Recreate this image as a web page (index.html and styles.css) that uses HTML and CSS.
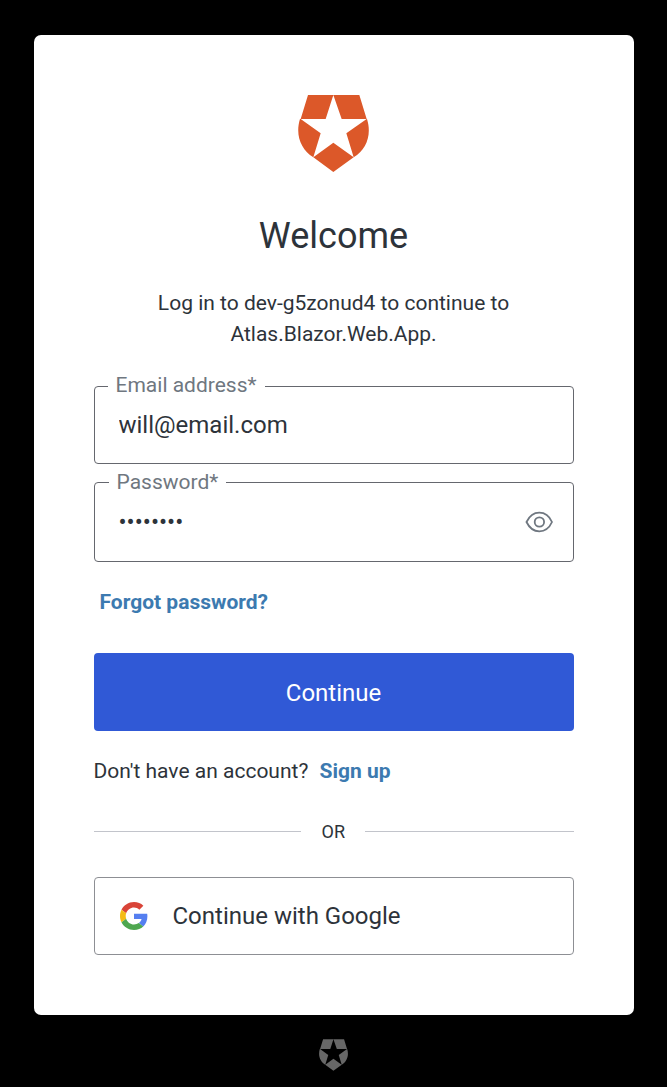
FILE: index.html
```html
<!DOCTYPE html>
<html lang="en">
<head>
<meta charset="utf-8">
<title>Log in</title>
<link rel="stylesheet" href="styles.css">
</head>
<body>
<main class="card">
  <svg class="logo" viewBox="45 45 213 231" aria-hidden="true">
    <path id="shield" fill="currentColor" d="M75 45H151L128 117H53ZM151 45H229L251 117H176ZM53 117L113 160L91 232C54 208 36 165 51 117ZM251 117L190 160L212 232C250 208 267 165 252 117ZM91 232L151 188L212 232L151 276Z"/>
  </svg>
  <h1 class="title">Welcome</h1>
  <p class="intro">Log in to dev-g5zonud4 to continue to<br>Atlas.Blazor.Web.App.</p>
  <form class="form">
    <div class="field email">
      <label class="label" for="email">Email address*</label>
      <input class="input" id="email" type="text" value="will@email.com">
    </div>
    <div class="field password">
      <label class="label" for="password">Password*</label>
      <input class="input" id="password" type="password" value="password">
      <svg class="eye" viewBox="0 0 28 22" fill="none" stroke="currentColor" stroke-width="1.8" aria-hidden="true">
        <path d="M1.500 11C4.500 4.800 9 1.700 14.300 1.700S24.200 4.800 27 11C24.200 17.200 19.600 20.300 14.300 20.300S4.500 17.200 1.500 11Z"/>
        <circle cx="14.400" cy="11" r="4.700"/>
      </svg>
    </div>
    <a class="link forgot">Forgot password?</a>
    <button class="submit" type="button">Continue</button>
  </form>
  <p class="signup">Don't have an account? <a class="link">Sign up</a></p>
  <div class="divider"><span class="or">OR</span></div>
  <button class="google" type="button">
    <svg class="google-icon" viewBox="0 0 48 48" aria-hidden="true">
      <path fill="#d94438" d="M24 9.500c3.540 0 6.710 1.220 9.210 3.600l6.850-6.850C35.900 2.380 30.470 0 24 0 14.620 0 6.510 5.380 2.560 13.220l7.980 6.190C12.430 13.720 17.740 9.500 24 9.500z"/>
      <path fill="#557ff0" d="M46.980 24.550c0-1.570-.15-3.090-.38-4.550H24v9.020h12.940c-.58 2.960-2.260 5.480-4.780 7.180l7.730 6c4.510-4.180 7.090-10.360 7.090-17.650z"/>
      <path fill="#f4bc16" d="M10.530 28.590c-.48-1.450-.76-2.990-.76-4.590s.27-3.140.76-4.590l-7.980-6.190C.92 16.460 0 20.120 0 24c0 3.880.92 7.540 2.560 10.780l7.970-6.190z"/>
      <path fill="#4ea750" d="M24 48c6.480 0 11.930-2.130 15.890-5.810l-7.730-6c-2.150 1.450-4.920 2.300-8.160 2.300-6.260 0-11.570-4.220-13.470-9.910l-7.980 6.190C6.510 42.620 14.620 48 24 48z"/>
    </svg>
    <span>Continue with Google</span>
  </button>
</main>
<svg class="badge" viewBox="45 45 213 231" aria-hidden="true"><use href="#shield"/></svg>
</body>
</html>
```
FILE: styles.css
```css
* { box-sizing: border-box; }
body {
  margin: 0;
  padding: 35px 33px 0 34px;
  height: 1087px;
  background: #000;
  color: #2d333a;
  font-family: Roboto, "Liberation Sans", sans-serif;
  font-size: 21px;
  display: flex;
  flex-direction: column;
  align-items: center;
}
.card {
  width: 600px;
  height: 980px;
  padding: 60px;
  background: #fff;
  border-radius: 7px;
  display: flex;
  flex-direction: column;
}
.logo {
  width: 71px;
  height: 77px;
  margin: 0 0 0 204px;
  color: #dc5829;
  flex: none;
}
.title {
  margin: 43px 1px 0 0;
  font-size: 36px;
  line-height: 43px;
  font-weight: 400;
  text-align: center;
}
.intro {
  margin: 30px 1px 0 0;
  line-height: 31px;
  text-align: center;
}
.form {
  display: flex;
  flex-direction: column;
  margin-top: 36px;
}
.field {
  position: relative;
  border: 1px solid #65676e;
  border-radius: 4px;
  display: flex;
  align-items: center;
}
.email { height: 78px; }
.password { height: 80px; margin-top: 18px; }
.label {
  position: absolute;
  top: -15px;
  left: 13px;
  padding: 0 8px 0 7.5px;
  background: #fff;
  color: #6f7780;
  line-height: 26px;
}
.password .label { top: -14px; left: 14px; }
.input {
  flex: 1;
  min-width: 0;
  height: 40px;
  padding: 0 0 0 23.5px;
  border: 0;
  outline: 0;
  background: none;
  color: inherit;
  font: inherit;
  font-size: 24px;
}
.eye {
  width: 28px;
  height: 22px;
  margin-right: 20px;
  color: #6f7780;
}
.link { color: #3c7ab0; font-weight: 700; }
.forgot { margin: 27px 0 0 5.5px; line-height: 26px; }
.submit {
  margin-top: 38px;
  height: 78px;
  padding: 2px 1px 0 0;
  border: 0;
  border-radius: 4px;
  background: #3059d6;
  color: #fff;
  font: inherit;
  font-size: 24px;
}
.signup { margin: 27px 0 0 -0.5px; line-height: 26px; }
.signup .link { margin-left: 6px; }
.divider {
  display: flex;
  align-items: center;
  margin-top: 37px;
  height: 21px;
  gap: 20.5px;
  font-size: 18px;
}
.divider::before, .divider::after {
  content: "";
  width: 207px;
  height: 1px;
  background: #c2c4cb;
}
.divider::after { flex: 1; }
.google {
  display: flex;
  align-items: center;
  gap: 24.5px;
  height: 78px;
  margin-top: 35px;
  padding: 0 25px;
  border: 1px solid #8d8f94;
  border-radius: 4px;
  background: #fff;
  color: inherit;
  font: inherit;
  font-size: 24px;
}
.google-icon { width: 28px; height: 28px; }
.badge {
  width: 29px;
  height: 32px;
  margin: 24px 1px 0 0;
  color: #676767;
}
```
